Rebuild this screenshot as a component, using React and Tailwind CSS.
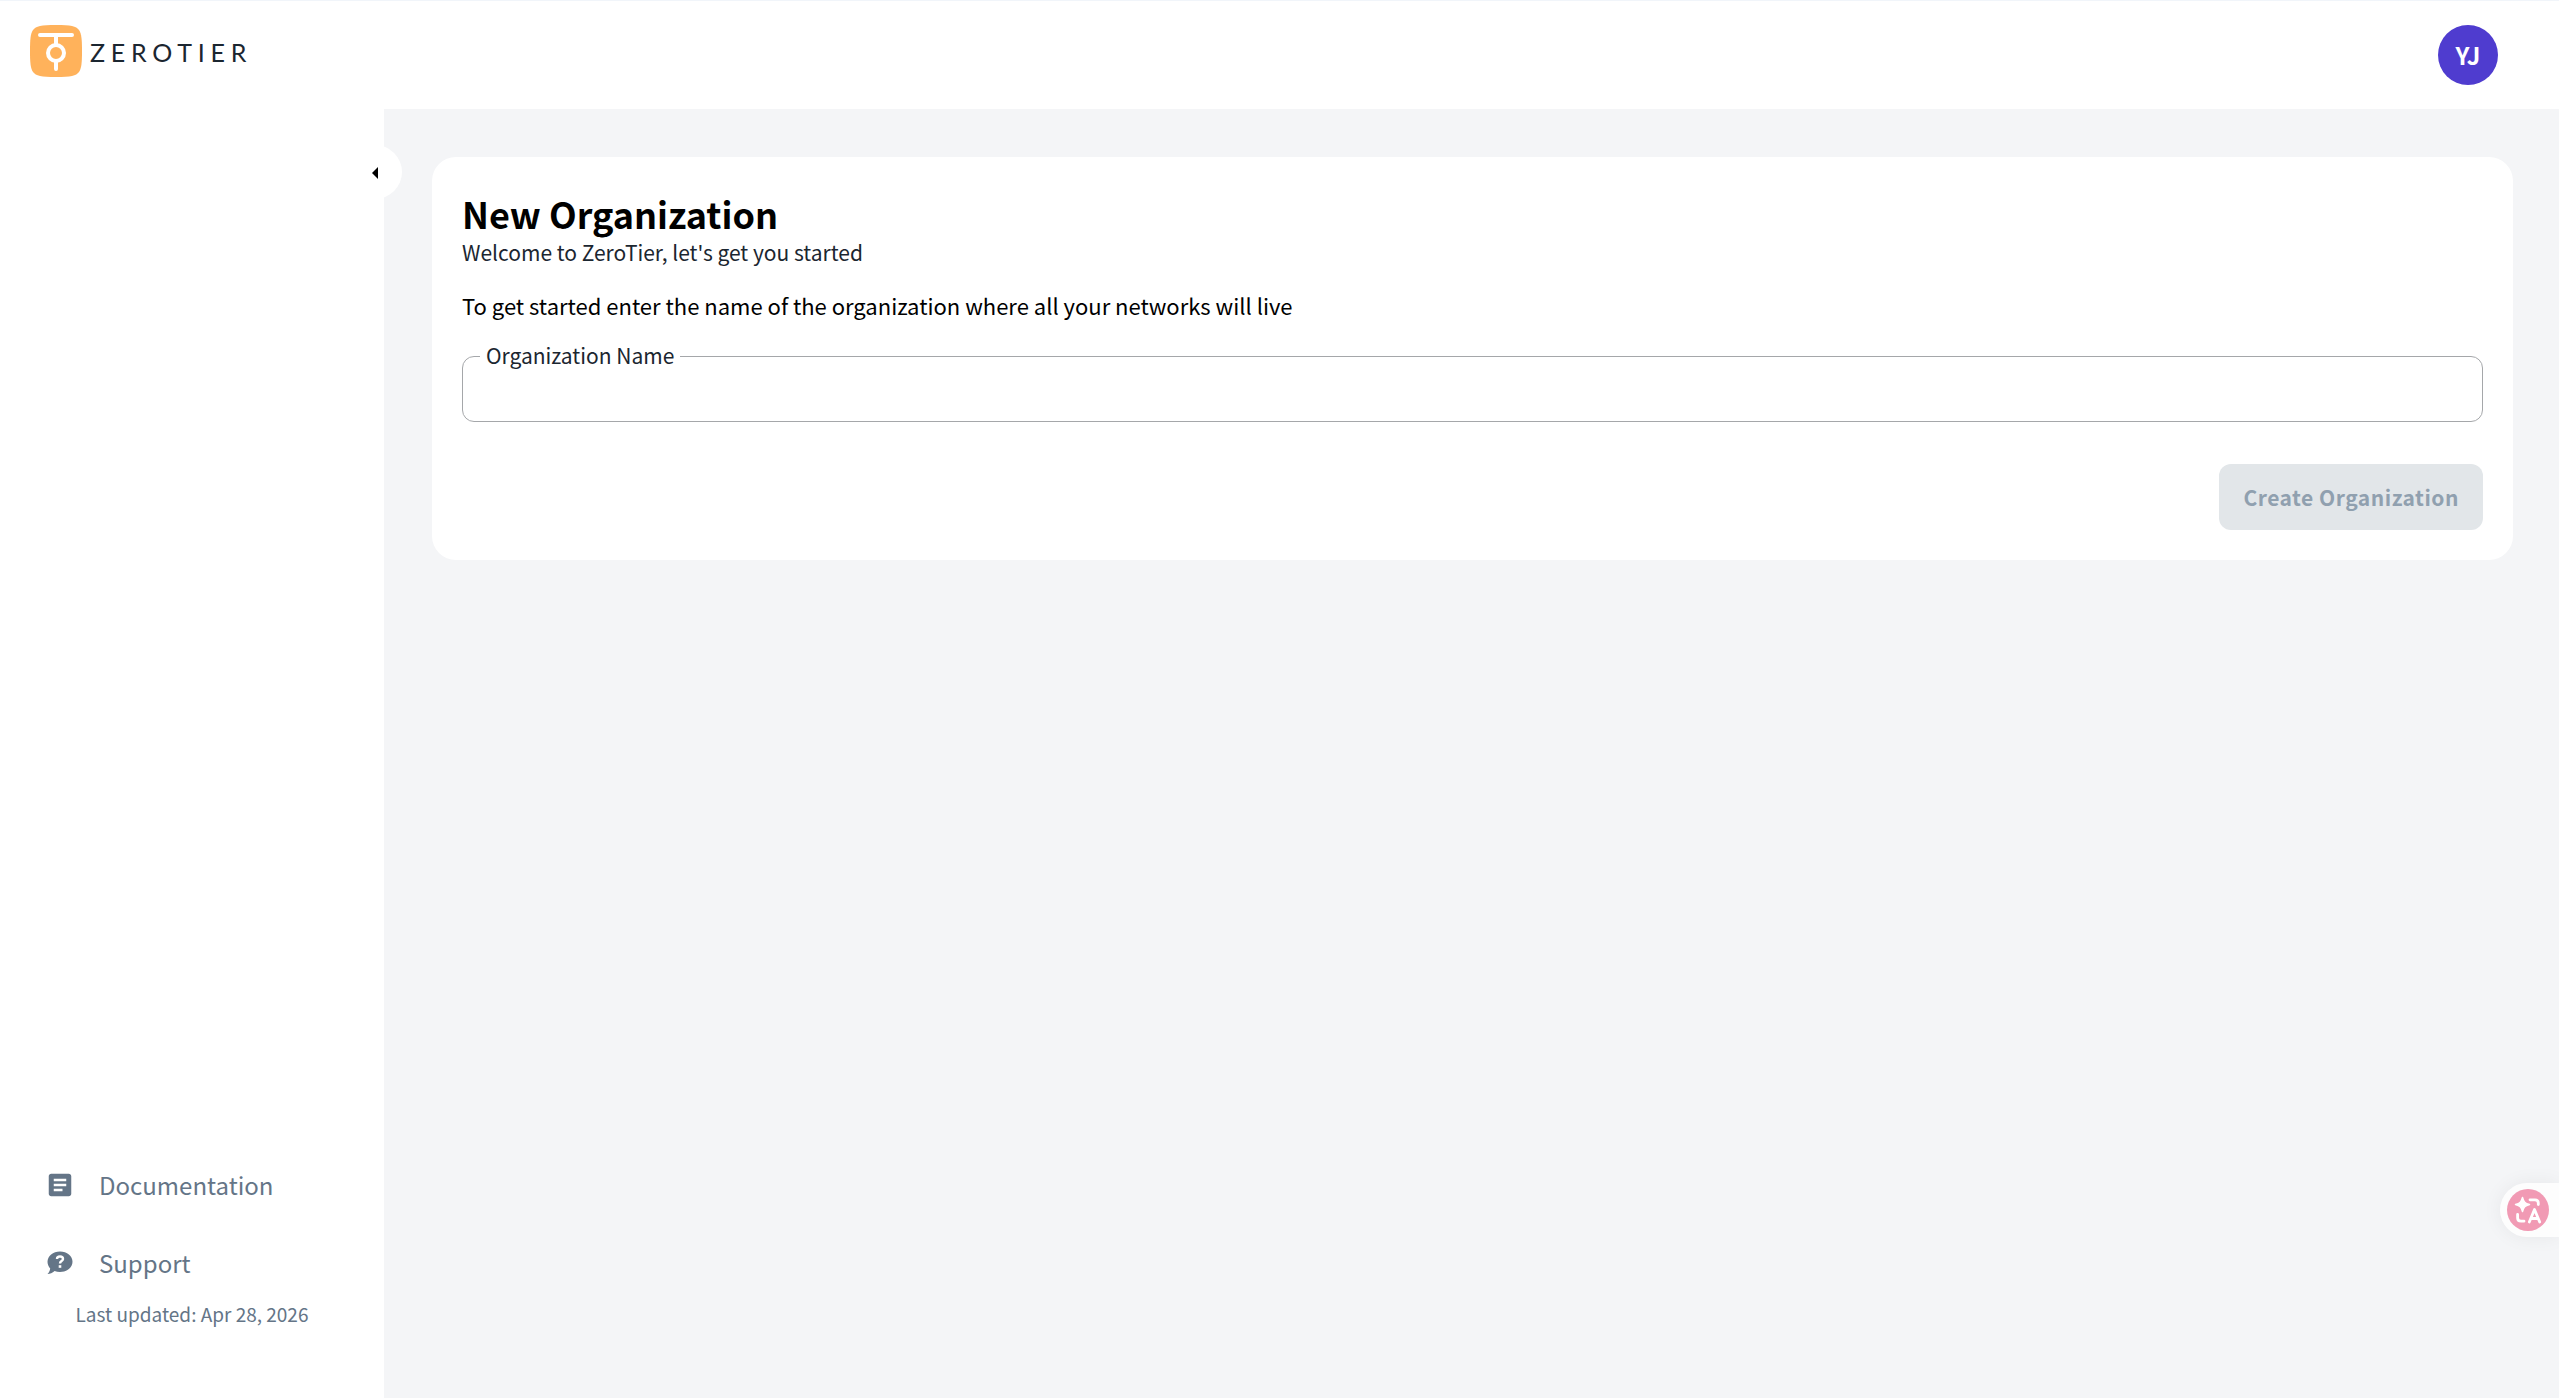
import { useState } from 'react'
import { MdArticle } from 'react-icons/md'

function LogoMark() {
  return (
    <svg viewBox="0 0 52 52" className="size-13 shrink-0" fill="none" aria-hidden="true">
      <path
        d="M26 0C41 0 46 1 49 5C51.500 9 52 14 52 26C52 38 51.500 43 49 47C46 51 41 52 26 52C11 52 6 51 3 47C.5 43 0 38 0 26C0 14 .5 9 3 5C6 1 11 0 26 0Z"
        fill="#ffb25b"
      />
      <path d="M10 10H42M26 10V19M26 37V44" stroke="#fff" strokeWidth="4" strokeLinecap="round" />
      <circle cx="26" cy="28" r="8" stroke="#fff" strokeWidth="4" />
    </svg>
  )
}

function SupportIcon() {
  return (
    <svg viewBox="0 0 26 24" className="h-6 w-[26px] shrink-0" fill="none" aria-hidden="true">
      <path
        d="M13 .5C20 .5 25.500 5 25.500 10.800C25.500 16.600 20 21 13 21C11 21 9.200 20.600 7.600 20C5.500 21.800 3 23 .5 23C2 21.500 3 19.500 3.200 17.500C1.500 15.700.5 13.300.5 10.800C.5 5 6 .5 13 .5Z"
        fill="currentColor"
      />
      <path d="M10 8C10 4.600 16 4.600 16 8C16 10.200 13 10 13 12.500" stroke="#fff" strokeWidth="2.400" />
      <path d="M11.700 14.200H14.300V16.800H11.700Z" fill="#fff" />
    </svg>
  )
}

function TranslateIcon() {
  return (
    <svg viewBox="0 0 42 42" className="size-[42px]" fill="none" aria-hidden="true">
      <circle cx="21" cy="21" r="21" fill="#f19ab4" />
      <path
        d="M15.500 8.500C16.700 13 18 14.300 22.500 15.500C18 16.700 16.700 18 15.500 22.500C14.300 18 13 16.700 8.500 15.500C13 14.300 14.300 13 15.500 8.500Z"
        fill="#fff"
        stroke="#fff"
        strokeWidth="1.500"
        strokeLinejoin="round"
      />
      <path d="M23 10.800H28C30.300 10.800 31.300 12 31.300 14V15.500M10.600 25.500V29C10.600 31.200 11.700 32.200 14 32.200H17" stroke="#fff" strokeWidth="2.800" strokeLinecap="round" />
      <path d="M22.300 33L27.500 20.500L32.700 33M24.500 29.500H30.500" stroke="#fff" strokeWidth="2.800" strokeLinecap="round" strokeLinejoin="round" />
    </svg>
  )
}

const links = [
  { label: 'Documentation', icon: <MdArticle className="-mx-0.5 size-[30px] shrink-0" /> },
  { label: 'Support', icon: <SupportIcon /> },
]

export default function App() {
  const [name, setName] = useState('')

  return (
    <div className="flex min-h-screen flex-col bg-[#f4f5f7] font-['Noto_Sans_CJK_SC',sans-serif] text-[21px] leading-[30px] text-[#1b2630]">
      <header className="flex h-[109px] items-start justify-between border-t border-[#f1f5fa] bg-white pt-6 pr-[61px] pl-[30px]">
        <a href="#" className="flex items-center gap-2">
          <LogoMark />
          <span className="pt-0.5 font-[Lato,sans-serif] text-[25px] tracking-[0.23em]">ZEROTIER</span>
        </a>
        <button type="button" className="size-[60px] rounded-full bg-[#4f3ccf] text-2xl font-bold text-white">
          YJ
        </button>
      </header>

      <div className="flex flex-1">
        <aside className="relative flex w-96 shrink-0 flex-col justify-end bg-white pb-[72px]">
          <button
            type="button"
            aria-label="Collapse sidebar"
            className="absolute top-9 -right-[18px] flex size-[54px] items-center justify-center rounded-full bg-white pt-0.5"
          >
            <svg viewBox="0 0 6 12" className="h-3 w-1.5" fill="#000" aria-hidden="true">
              <path d="M6 0V12L0 6Z" />
            </svg>
          </button>
          <nav className="flex flex-col">
            {links.map((l) => (
              <a key={l.label} href="#" className="flex h-[78px] items-center gap-[26px] pl-[47px] text-2xl text-[#647587]">
                {l.icon}
                {l.label}
              </a>
            ))}
          </nav>
          <p className="text-center text-[19px] leading-6 text-[#647587]">Last updated: Apr 28, 2026</p>
        </aside>

        <main className="min-w-0 flex-1 p-12 pr-[46px]">
          <form className="rounded-3xl bg-white px-[30px] pt-8 pb-[30px]" onSubmit={(e) => e.preventDefault()}>
            <h1 className="text-4xl leading-12 font-bold text-black">New Organization</h1>
            <p>Welcome to ZeroTier, let&apos;s get you started</p>
            <p className="mt-[23px] text-[22px] text-black">
              To get started enter the name of the organization where all your networks will live
            </p>
            <div className="relative mt-9">
              <input
                id="org-name"
                value={name}
                onChange={(e) => setName(e.target.value)}
                className="block h-[66px] w-full rounded-xl border border-[#a5a7aa] bg-white px-6 outline-none"
              />
              <label htmlFor="org-name" className="absolute -top-4 left-[18px] bg-white px-1.5">
                Organization Name
              </label>
            </div>
            <div className="mt-[42px] flex justify-end">
              <button type="submit" disabled={!name} className="h-[66px] rounded-xl bg-[#e2e6e9] px-6 font-bold tracking-wide text-[#90a0af]">
                Create Organization
              </button>
            </div>
          </form>
        </main>
      </div>

      <button
        type="button"
        aria-label="Translate page"
        className="fixed right-0 bottom-[161px] rounded-l-full bg-[#fdfdfd] py-1.5 pr-2.5 pl-[7px] shadow-[0_0_20px_rgba(0,0,0,0.06)]"
      >
        <TranslateIcon />
      </button>
    </div>
  )
}
